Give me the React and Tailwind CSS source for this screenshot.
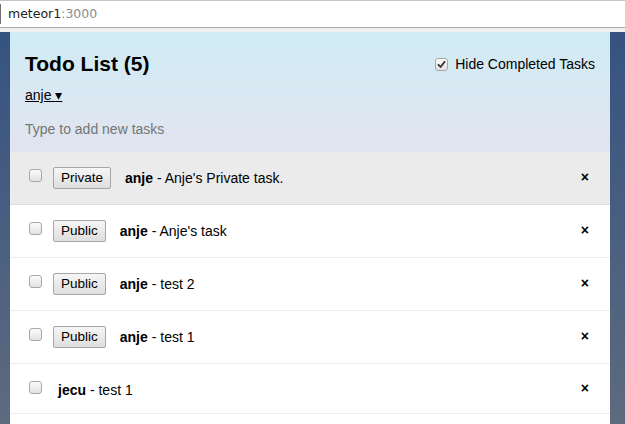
import React from "react";

function Box({ checked }) {
  return (
    <span className="inline-flex items-center justify-center w-[13px] h-[13px] rounded-[3px] border border-[#a8a8a8] bg-gradient-to-b from-[#fbfbfb] to-[#e2e2e2] shrink-0">
      {checked && (
        <svg width="9" height="9" viewBox="0 0 9 9">
          <path d="M1.5 4.8 L3.6 7 L7.6 1.8" fill="none" stroke="#333" strokeWidth="1.8" strokeLinecap="round" strokeLinejoin="round" />
        </svg>
      )}
    </span>
  );
}

function Row({ priv, btn, user, text, last }) {
  return (
    <li
      className={`flex items-center pl-[19px] pr-[21px] border-b ${
        priv ? "bg-[#ebebeb] border-[#dddddd]" : "bg-white border-[#ececec]"
      } ${last ? "h-[50px]" : "h-[53px]"}`}
    >
      <span className={last ? "mt-[0px]" : "mt-[-3px]"}>
        <Box />
      </span>
      {btn ? (
        <span className="ml-[11px] h-[22px] px-[7px] flex items-center border border-[#a6a6a6] rounded-[2px] bg-gradient-to-b from-[#f6f6f6] to-[#dedede] text-[13.5px] text-black">
          {btn}
        </span>
      ) : null}
      <span className={`${btn ? "ml-[14px]" : "ml-[16px] mt-[3px]"} text-[14px] text-black`}>
        <b>{user}</b> - {text}
      </span>
      <span className="ml-auto font-bold text-[14px] text-black leading-none mt-[-2px]">×</span>
    </li>
  );
}

export default function App() {
  return (
    <div className="w-[625px] h-[424px] overflow-hidden flex flex-col" style={{ fontFamily: '"Liberation Sans", Arial, sans-serif' }}>
      <div className="h-[28px] bg-white border-t border-[#c4c4c4] border-b border-b-[#a9a9a9] flex items-center relative shrink-0">
        <span className="absolute left-0 top-[3px] w-[1px] h-[20px] bg-[#707070]" />
        <span className="ml-[8px] text-[12.5px] text-[#222]" style={{ fontFamily: '"DejaVu Sans", sans-serif' }}>
          meteor1<span className="text-[#8a8a8a]">:3000</span>
        </span>
      </div>
      <div className="h-[4px] bg-[#efefef] shrink-0" />
      <div className="flex-1 bg-gradient-to-b from-[#355381] to-[#5e6a7e] flex">
        <div className="ml-[10px] w-[600px] bg-white flex flex-col">
          <header className="h-[120px] bg-gradient-to-b from-[#d0ecf4] to-[#e1e4f0] pt-[20px] px-[15px] flex flex-col">
            <div className="flex items-start justify-between">
              <h1 className="text-[21px] leading-[24px] font-bold text-black">Todo List (5)</h1>
              <label className="flex items-center mt-[2px] text-[14px] text-black">
                <Box checked />
                <span className="ml-[7px]">Hide Completed Tasks</span>
              </label>
            </div>
            <div className="mt-[11px] text-[14px] leading-[16px] text-black underline">anje ▾</div>
            <div className="mt-[18px] text-[14px] leading-[16px] text-[#757575]">Type to add new tasks</div>
          </header>
          <ul>
            <Row priv btn="Private" user="anje" text="Anje's Private task." />
            <Row btn="Public" user="anje" text="Anje's task" />
            <Row btn="Public" user="anje" text="test 2" />
            <Row btn="Public" user="anje" text="test 1" />
            <Row user="jecu" text="test 1" last />
          </ul>
        </div>
      </div>
    </div>
  );
}
